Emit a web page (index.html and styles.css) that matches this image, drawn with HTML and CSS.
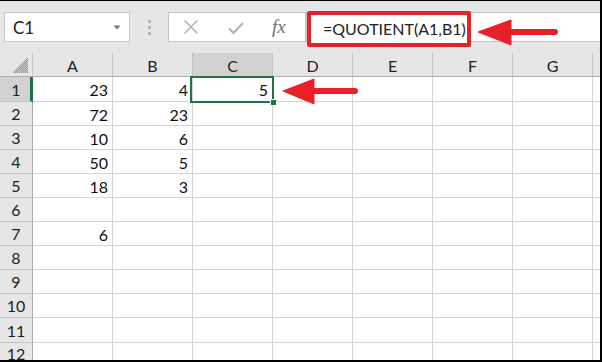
FILE: index.html
```html
<!DOCTYPE html>
<html>
<head>
<meta charset="utf-8">
<link rel="stylesheet" href="styles.css">
</head>
<body>
<div class="frame">
  <div class="toolbar">
    <div class="namebox">
      <span class="name">C1</span>
      <svg class="drop" width="8" height="5" viewBox="0 0 8 5"><polygon points="0.5,0.5 7.5,0.5 4,4.5" fill="#7b7b7b"/></svg>
    </div>
    <div class="dots"><i></i><i></i><i></i></div>
    <div class="fbuttons">
      <svg class="ico cancel" width="16" height="16" viewBox="0 0 16 16"><path d="M1.5 1.5 L14.5 14.5 M14.5 1.5 L1.5 14.5" stroke="#b3b3b3" stroke-width="1.6" fill="none"/></svg>
      <svg class="ico enter" width="16" height="14" viewBox="0 0 16 14"><path d="M1 7.5 L5.5 12 L15 2" stroke="#b3b3b3" stroke-width="2" fill="none"/></svg>
      <span class="fx">fx</span>
    </div>
    <div class="finput">
      <div class="formula">=QUOTIENT(A1,B1)</div>
    </div>
  </div>
  <div class="sheet">
    <div class="grid">
      <div class="corner"><svg width="16" height="16" viewBox="0 0 16 16"><defs><pattern id="dith" width="2" height="2" patternUnits="userSpaceOnUse"><rect width="2" height="2" fill="#c9c9c9"/><rect width="1" height="1" fill="#9a9a9a"/><rect x="1" y="1" width="1" height="1" fill="#9a9a9a"/></pattern></defs><polygon points="16,0 16,16 0,16" fill="url(#dith)"/></svg></div>
      <div class="ch">A</div><div class="ch">B</div><div class="ch sel">C</div><div class="ch">D</div><div class="ch">E</div><div class="ch">F</div><div class="ch">G</div><div class="ch last"></div>

      <div class="rh sel">1</div><div class="c">23</div><div class="c">4</div><div class="c">5</div><div class="c"></div><div class="c"></div><div class="c"></div><div class="c"></div><div class="c last"></div>
      <div class="rh">2</div><div class="c">72</div><div class="c">23</div><div class="c"></div><div class="c"></div><div class="c"></div><div class="c"></div><div class="c"></div><div class="c last"></div>
      <div class="rh">3</div><div class="c">10</div><div class="c">6</div><div class="c"></div><div class="c"></div><div class="c"></div><div class="c"></div><div class="c"></div><div class="c last"></div>
      <div class="rh">4</div><div class="c">50</div><div class="c">5</div><div class="c"></div><div class="c"></div><div class="c"></div><div class="c"></div><div class="c"></div><div class="c last"></div>
      <div class="rh">5</div><div class="c">18</div><div class="c">3</div><div class="c"></div><div class="c"></div><div class="c"></div><div class="c"></div><div class="c"></div><div class="c last"></div>
      <div class="rh">6</div><div class="c"></div><div class="c"></div><div class="c"></div><div class="c"></div><div class="c"></div><div class="c"></div><div class="c"></div><div class="c last"></div>
      <div class="rh">7</div><div class="c">6</div><div class="c"></div><div class="c"></div><div class="c"></div><div class="c"></div><div class="c"></div><div class="c"></div><div class="c last"></div>
      <div class="rh">8</div><div class="c"></div><div class="c"></div><div class="c"></div><div class="c"></div><div class="c"></div><div class="c"></div><div class="c"></div><div class="c last"></div>
      <div class="rh">9</div><div class="c"></div><div class="c"></div><div class="c"></div><div class="c"></div><div class="c"></div><div class="c"></div><div class="c"></div><div class="c last"></div>
      <div class="rh">10</div><div class="c"></div><div class="c"></div><div class="c"></div><div class="c"></div><div class="c"></div><div class="c"></div><div class="c"></div><div class="c last"></div>
      <div class="rh">11</div><div class="c"></div><div class="c"></div><div class="c"></div><div class="c"></div><div class="c"></div><div class="c"></div><div class="c"></div><div class="c last"></div>
      <div class="rh cut">12</div><div class="c"></div><div class="c"></div><div class="c"></div><div class="c"></div><div class="c"></div><div class="c"></div><div class="c"></div><div class="c last"></div>
    </div>
    <div class="selection"><span class="handle"></span></div>
  </div>
  <svg class="arrows" width="602" height="362" viewBox="0 0 602 362">
    <g fill="#e8202a" stroke="#e8202a">
      <polygon points="478,32 511,20 511,45" stroke-width="1" stroke-linejoin="round"/>
      <line x1="509" y1="32" x2="555" y2="32" stroke-width="6" stroke-linecap="round"/>
      <polygon points="283,91 314,79 314,104" stroke-width="1" stroke-linejoin="round"/>
      <line x1="312" y1="91" x2="355" y2="91" stroke-width="6" stroke-linecap="round"/>
    </g>
  </svg>
</div>
</body>
</html>
```
FILE: styles.css
```css
* { box-sizing: border-box; }
html, body { margin: 0; padding: 0; }
body { width: 602px; height: 362px; overflow: hidden; background: #fff; font-family: Lato, "Liberation Sans", sans-serif; }

.frame {
  position: relative;
  width: 602px;
  height: 362px;
  border-top: 1px solid #000;
  border-right: 2px solid #000;
  border-bottom: 2px solid #000;
  background: #e6e6e6;
  overflow: hidden;
  display: flex;
  flex-direction: column;
}

.toolbar {
  height: 52px;
  flex: none;
  display: flex;
  align-items: flex-start;
  padding-top: 11px;
}

.namebox {
  margin-left: 4px;
  width: 126px;
  height: 30px;
  background: #fff;
  border: 1px solid #c6c6c6;
  display: flex;
  align-items: center;
  justify-content: space-between;
  padding: 0 8px 0 8px;
}
.name { font-size: 17px; color: #222; }
.drop { margin-top: 1px; }

.dots {
  width: 38px;
  height: 30px;
  display: flex;
  flex-direction: column;
  align-items: center;
  justify-content: center;
  gap: 3px;
}
.dots i { display: block; width: 3px; height: 3px; border-radius: 50%; background: #a3a3a3; }

.fbuttons {
  width: 138px;
  height: 30px;
  background: #fff;
  border: 1px solid #c6c6c6;
  display: flex;
  align-items: center;
  padding-left: 14px;
}
.ico { display: block; flex: none; }
.cancel { margin-right: 29px; }
.enter { margin-right: 28px; margin-top: 1px; }
.fx {
  font-family: "Liberation Serif", "DejaVu Serif", serif;
  font-style: italic;
  font-size: 19px;
  color: #707070;
  line-height: 1;
  margin-top: -2px;
}

.finput {
  flex: 1;
  height: 30px;
  background: #fff;
  border: 1px solid #c6c6c6;
  border-right: 0;
  position: relative;
}
.formula {
  position: absolute;
  left: 0px;
  top: -2px;
  width: 164px;
  height: 36px;
  border: 4px solid #e8202a;
  border-radius: 2px;
  background: #fff;
  font-size: 16px;
  color: #222;
  line-height: 27px;
  padding-left: 12px;
  white-space: nowrap;
}

.sheet {
  position: relative;
  flex: 1;
}

.grid {
  display: grid;
  grid-template-columns: 33px repeat(7, 80px) 1fr;
  grid-template-rows: 24px 25px repeat(9, 24px) 25px 1fr;
  height: 100%;
  background: #fff;
}

.corner {
  background: #e6e6e6;
  border-right: 1px solid #c4c4c4;
  border-bottom: 1px solid #ababab;
  display: flex;
  align-items: flex-end;
  justify-content: flex-end;
  padding: 0 4px 3px 0;
}
.corner svg { display: block; }

.ch {
  background: #e6e6e6;
  border-right: 1px solid #c4c4c4;
  border-bottom: 1px solid #ababab;
  font-size: 16px;
  color: #222;
  display: flex;
  align-items: center;
  justify-content: center;
  padding-top: 1px;
}
.ch.sel { background: #d2d2d2; }
.ch.last { border-right: 0; }

.rh {
  background: #e6e6e6;
  border-right: 1px solid #ababab;
  border-bottom: 1px solid #c4c4c4;
  font-size: 16px;
  color: #222;
  display: flex;
  align-items: center;
  justify-content: center;
}
.rh.sel { background: #d2d2d2; border-right: 3px solid #217346; padding-left: 2px; }
.rh.cut { align-items: flex-start; padding-top: 1px; border-bottom: 0; }

.c {
  border-right: 1px solid #d4d4d4;
  border-bottom: 1px solid #d4d4d4;
  font-size: 16px;
  color: #111;
  display: flex;
  align-items: center;
  justify-content: flex-end;
  padding-right: 4px;
  padding-top: 1px;
}
.c.last { border-right: 0; }

.selection {
  position: absolute;
  left: 190px;
  top: 23px;
  width: 84px;
  height: 27px;
  border: 2px solid #217346;
}
.handle {
  position: absolute;
  right: -4px;
  bottom: -4px;
  width: 6px;
  height: 6px;
  background: #217346;
  border: 1px solid #fff;
  border-right: 0;
  border-bottom: 0;
}

.arrows {
  position: absolute;
  left: 0;
  top: -1px;
  pointer-events: none;
}
```
